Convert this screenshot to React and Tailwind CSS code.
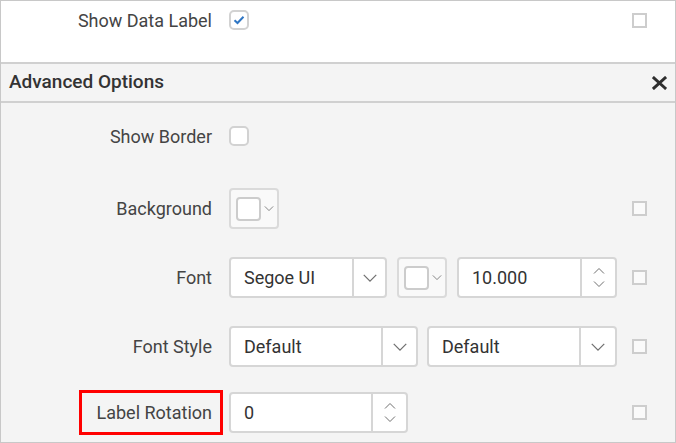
import React from "react";

function Chevron({ size = 12, className = "" }) {
  return (
    <svg width={size} height={size / 2 + 2} viewBox="0 0 12 8" className={className}>
      <path d="M1 1.5 L6 6.5 L11 1.5" fill="none" stroke="#707070" strokeWidth="1" />
    </svg>
  );
}

function ChevronUp({ className = "" }) {
  return (
    <svg width="12" height="8" viewBox="0 0 12 8" className={className}>
      <path d="M1 6.5 L6 1.5 L11 6.5" fill="none" stroke="#707070" strokeWidth="1" />
    </svg>
  );
}

function SideBox() {
  return <div className="ml-auto mr-[28px] w-[15px] h-[15px] border-2 border-[#cdcdcd] bg-[#fafafa] shrink-0" />;
}

function Check({ checked }) {
  return (
    <div className="w-[20px] h-[20px] rounded-[5px] border-2 border-[#d2d2d2] bg-white flex items-center justify-center">
      {checked && (
        <svg width="12" height="10" viewBox="0 0 12 10">
          <path d="M1.5 5.2 L4.5 8 L10.5 1.8" fill="none" stroke="#2f76c4" strokeWidth="2" />
        </svg>
      )}
    </div>
  );
}

function Select({ value, width, arrow = 33 }) {
  return (
    <div className={`flex h-[41px] rounded-[4px] border-2 border-[#d6d6d6] bg-white ${width}`}>
      <div className="flex-1 flex items-center pl-[13px] text-[18px] text-[#333]">{value}</div>
      <div className="flex items-center justify-center border-l-2 border-[#d6d6d6]" style={{ width: arrow }}>
        <Chevron size={16} />
      </div>
    </div>
  );
}

function Spinner({ value, width, arrow = 35 }) {
  return (
    <div className={`flex h-[41px] rounded-[4px] border-2 border-[#d6d6d6] bg-white ${width}`}>
      <div className="flex-1 flex items-center pl-[13px] text-[18px] text-[#333]">{value}</div>
      <div className="flex flex-col items-center justify-center gap-[5px] border-l-2 border-[#d6d6d6]" style={{ width: arrow }}>
        <ChevronUp />
        <Chevron />
      </div>
    </div>
  );
}

function ColorPick() {
  return (
    <div className="flex items-center h-[41px] w-[50px] rounded-[4px] border-2 border-[#dadada] bg-[#f9f9f9] pl-[5px]">
      <div className="w-[25px] h-[24px] rounded-[4px] border-2 border-[#cccccc] bg-white" />
      <Chevron size={10} className="ml-[3px]" />
    </div>
  );
}

function Label({ children }) {
  return (
    <div className="w-[222px] flex justify-end shrink-0">
      <span className="pr-[11px] text-[18px] text-[#444]">{children}</span>
    </div>
  );
}

export default function App() {
  return (
    <div
      className="w-[676px] h-[443px] border border-[#c8c8c8] overflow-hidden bg-[#f4f4f4]"
      style={{ fontFamily: "Roboto, 'Liberation Sans', sans-serif" }}
    >
      <div className="h-[63px] bg-white border-b-2 border-[#d0d0d0] flex items-start pt-[9px]">
        <div className="w-[222px] flex justify-end shrink-0 -mt-[3px]">
          <span className="pr-[11px] text-[18px] text-[#444]">Show Data Label</span>
        </div>
        <div className="ml-[6px]">
          <Check checked />
        </div>
        <div className="ml-auto mr-[28px] mt-[3px] w-[15px] h-[15px] border-2 border-[#cdcdcd] bg-white" />
      </div>

      <div className="h-[39px] border-b-2 border-[#d0d0d0] flex items-center pl-[8px] pr-[8px]">
        <span className="text-[19px] font-medium text-[#333]">Advanced Options</span>
        <svg width="15" height="14" viewBox="0 0 15 14" className="ml-auto">
          <path d="M2 2 L13 12 M13 2 L2 12" stroke="#2e2e2e" strokeWidth="3" strokeLinecap="square" />
        </svg>
      </div>

      <div className="flex flex-col">
        <div className="flex items-center mt-[23px] h-[20px]">
          <Label>Show Border</Label>
          <div className="ml-[6px]">
            <Check />
          </div>
        </div>

        <div className="flex items-center mt-[42px] h-[41px]">
          <Label>Background</Label>
          <div className="ml-[6px]">
            <ColorPick />
          </div>
          <SideBox />
        </div>

        <div className="flex items-center mt-[28px] h-[41px]">
          <Label>Font</Label>
          <div className="ml-[6px] flex gap-[10px]">
            <Select value="Segoe UI" width="w-[158px]" />
            <ColorPick />
            <Spinner value="10.000" width="w-[160px]" />
          </div>
          <SideBox />
        </div>

        <div className="flex items-center mt-[28px] h-[41px]">
          <Label>Font Style</Label>
          <div className="ml-[6px] flex gap-[9px]">
            <Select value="Default" width="w-[189px]" arrow={35} />
            <Select value="Default" width="w-[190px]" arrow={36} />
          </div>
          <SideBox />
        </div>

        <div className="flex items-center mt-[23px] h-[45px]">
          <div className="w-[222px] flex justify-end shrink-0">
            <span className="h-[45px] flex items-center border-[3px] border-[#ff0000] pl-[15px] pr-[8px] text-[18px] text-[#444]">
              Label Rotation
            </span>
          </div>
          <div className="ml-[6px]">
            <Spinner value="0" width="w-[179px]" arrow={35} />
          </div>
          <SideBox />
        </div>
      </div>
    </div>
  );
}
